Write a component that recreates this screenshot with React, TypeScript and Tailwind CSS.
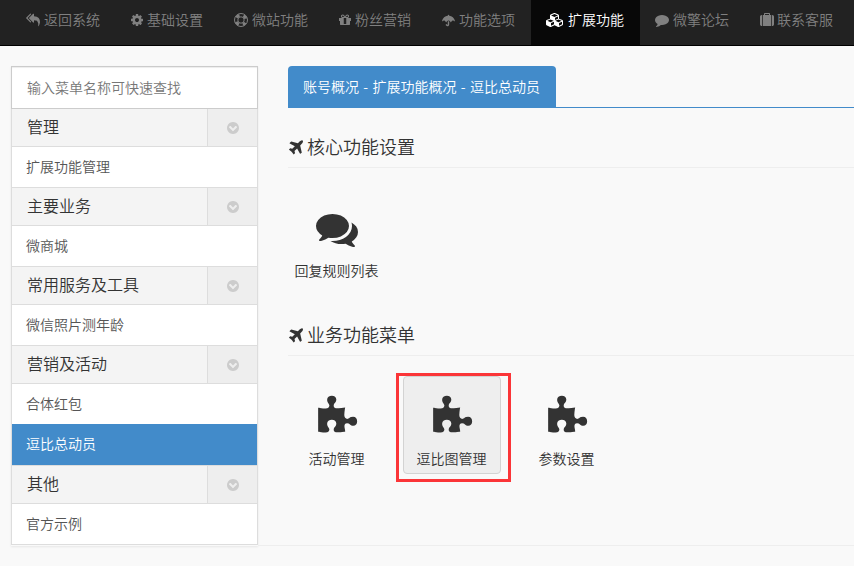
import React from "react";
import { FaUmbrella } from "react-icons/fa";

function Glyph({ d, className, viewBox = "0 0 1792 1792" }: { d: string; className: string; viewBox?: string }) {
  return (
    <svg viewBox={viewBox} fill="currentColor" className={`shrink-0 overflow-visible ${className}`}>
      <path d={d} />
    </svg>
  );
}

const REPLY_ALL =
  "M640 1082v70q0 42-39 59-13 5-25 5-27 0-45-19l-512-512q-19-19-19-45t19-45l512-512q29-31 70-14 39 17 39 59v69l-397 398q-19 19-19 45t19 45zm1152 58q0 58-17 133.5t-38.5 138-48 125-40.5 90.5l-20 40q-8 17-28 17-6 0-9-1-25-8-23-34 43-400-106-565-64-71-170.5-110.5t-267.5-52.5v251q0 42-39 59-13 5-25 5-27 0-45-19l-512-512q-19-19-19-45t19-45l512-512q29-31 70-14 39 17 39 59v262q411 28 599 221 169 173 169 509z";
const COG =
  "M1152 896q0-106-75-181t-181-75-181 75-75 181 75 181 181 75 181-75 75-181zm512-109v222q0 12-8 23t-20 13l-185 28q-19 54-39 91 35 50 107 138 10 12 10 25t-9 23q-27 37-99 108t-94 71q-12 0-26-9l-138-108q-44 23-91 38-16 136-29 186-7 28-36 28h-222q-14 0-24.5-8.5t-11.5-21.5l-28-184q-49-16-90-37l-141 107q-10 9-25 9-14 0-25-11-126-114-165-168-7-10-7-23 0-12 8-23 15-21 51-66.5t54-70.5q-27-50-41-99l-183-27q-13-2-21-12.5t-8-23.5v-222q0-12 8-23t19-13l186-28q14-46 39-92-40-57-107-138-10-12-10-24 0-10 9-23 26-36 98.5-107.5t94.5-71.5q13 0 26 10l138 107q44-23 91-38 16-136 29-186 7-28 36-28h222q14 0 24.5 8.5t11.5 21.5l28 184q49 16 90 37l142-107q9-9 24-9 13 0 25 10 129 119 165 170 7 8 7 22 0 12-8 23-15 21-51 66.5t-54 70.5q26 50 41 98l183 28q13 2 21 12.5t8 23.5z";
const GIFT =
  "M1056 1356v-716h-320v716q0 25 18 38.5t46 13.5h192q28 0 46-13.5t18-38.5zm-456-844h195l-126-161q-26-31-69-31-40 0-68 28t-28 68 28 68 68 28zm688-96q0-40-28-68t-68-28q-43 0-69 31l-125 161h194q40 0 68-28t28-68zm376 256v320q0 14-9 23t-23 9h-96v416q0 40-28 68t-68 28h-1088q-40 0-68-28t-28-68v-416h-96q-14 0-23-9t-9-23v-320q0-14 9-23t23-9h440q-93 0-158.5-65.5t-65.5-158.5 65.5-158.5 158.5-65.5q107 0 168 77l128 165 128-165q61-77 168-77 93 0 158.5 65.5t65.5 158.5-65.5 158.5-158.5 65.5h440q14 0 23 9t9 23z";
const CUBES =
  "M640 1632l384-192v-314l-384 164v342zm-64-454l404-173-404-173-404 173zm1088 454l384-192v-314l-384 164v342zm-64-454l404-173-404-173-404 173zm-448-293l384-165v-266l-384 164v267zm-64-379l441-189-441-189-441 189zm1088 518v416q0 36-19 67t-52 47l-448 224q-25 14-57 14t-57-14l-448-224q-4-2-7-4-2 2-7 4l-448 224q-25 14-57 14t-57-14l-448-224q-33-16-52-47t-19-67v-416q0-38 21.5-70t56.5-48l434-186v-400q0-38 21.5-70t56.5-48l448-192q23-10 50-10t50 10l448 192q35 16 56.5 48t21.5 70v400l434 186q36 16 57 48t21 70z";
const COMMENT =
  "M1792 896q0 174-120 321.5t-326 233-450 85.5q-70 0-145-8-198 175-460 242-49 14-114 22-17 2-30.5-9t-17.5-29v-1q-3-4-.5-12t2-10 4.5-9.5l6-9 7-8.5 8-9q7-8 31-34.5t34.5-38 31-39.5 32.5-51 27-59 26-76q-157-89-247.5-220t-90.5-281q0-174 120-321.5t326-233 450-85.5 450 85.5 326 233 120 321.5z";
const SUITCASE =
  "M640 256h512v-128h-512v128zm-352 0v1408h-64q-92 0-158-66t-66-158v-960q0-92 66-158t158-66h64zm1120 0v1408h-1024v-1408h128v-160q0-40 28-68t68-28h576q40 0 68 28t28 68v160h128zm384 224v960q0 92-66 158t-158 66h-64v-1408h64q92 0 158 66t66 158z";
const CHEVRON_CIRCLE =
  "M941 1293l454-454q19-19 19-45t-19-45l-102-102q-19-19-45-19t-45 19l-307 307-307-307q-19-19-45-19t-45 19l-102 102q-19 19-19 45t19 45l454 454q19 19 45 19t45-19zm723-397q0 209-103 385.5t-279.5 279.5-385.5 103-385.5-103-279.5-279.5-103-385.5 103-385.5 279.5-279.5 385.5-103 385.5 103 279.5 279.5 103 385.5z";
const PLANE =
  "M1568 160q44 52 12 148t-108 172l-161 161 160 696q5 19-12 33l-128 96q-7 6-19 6-4 0-7-1-15-3-21-16l-279-508-259 259 53 194q5 17-8 31l-96 96q-9 9-23 9h-2q-15-2-24-13l-189-252-252-189q-11-7-13-23-1-13 9-25l96-97q9-9 23-9 6 0 8 1l194 53 259-259-508-279q-14-8-17-24-2-16 9-27l128-128q14-13 30-8l665 159 160-160q76-76 172-108t148 12z";
const COMMENTS =
  "M1408 768q0 139-94 257t-256.5 186.5-353.5 68.5q-86 0-176-16-124 88-278 128-36 9-86 16h-3q-11 0-20.5-8t-11.5-21q-1-3-1-6.5t.5-6.5 2-6l2.5-5 3.5-5.5 4-5 4.5-5 4-4.5q5-6 23-25t26-29.5 22.5-29 25-38.5 20.5-44q-124-72-195-177t-71-224q0-139 94-257t256.5-186.5 353.5-68.5 353.5 68.5 256.5 186.5 94 257zm384 256q0 120-71 224.5t-195 176.5q10 24 20.5 44t25 38.5 22.5 29 26 29.5 23 25q1 1 4 4.5t4.5 5 4 5 3.5 5.5l2.5 5 2 6 .5 6.5-1 6.5q-3 14-13 22t-22 7q-50-7-86-16-154-40-278-128-90 16-176 16-271 0-472-132 58 4 88 4 161 0 309-45t264-129q125-92 192-212t67-254q0-77-23-152 129 71 204 178t75 230z";
const PUZZLE =
  "M1755 1083q0 81-44.5 135t-123.5 54q-41 0-77.5-17.5t-59-38-56.5-38-71-17.5q-110 0-110 124 0 39 16 115t15 115v5q-22 0-33 1-34 3-97.5 11.5t-115.5 13.5-98 5q-61 0-103-26.5t-42-83.5q0-37 17.5-71t38-56.5 38-59 17.5-77.5q0-79-54-123.5t-135-44.5q-84 0-143 45.5t-59 127.5q0 43 15 83t33.5 64.5 33.5 53 15 50.5q0 45-46 89-37 35-117 35-95 0-245-24-9-2-27.5-4t-27.5-4l-13-2q-1 0-3-1-2 0-2-1v-1024q2 1 17.5 3.5t34 5 21.5 3.5q150 24 245 24 80 0 117-35 46-44 46-89 0-22-15-50.5t-33.5-53-33.5-64.5-15-83q0-82 59-127.5t144-45.5q80 0 134 44.5t54 123.5q0 41-17.5 77.5t-38 59-38 56.5-17.5 71q0 57 42 83.5t103 26.5q64 0 180-15t163-17v2q-1 2-3.5 17.5t-5 34-3.5 21.5q-24 150-24 245 0 80 35 117 44 46 89 46 22 0 50.5-15t53-33.5 64.5-33.5 83-15q82 0 127.5 59t45.5 143z";

function LifeRing() {
  return (
    <svg viewBox="0 0 14 14" fill="none" stroke="currentColor" className="size-3.5 shrink-0">
      <circle cx="7" cy="7" r="6.5" />
      <circle cx="7" cy="7" r="3.2" />
      <circle cx="7" cy="7" r="4.9" strokeWidth="3" strokeDasharray="3.85 3.85" strokeDashoffset="1.92" transform="rotate(45 7 7)" />
    </svg>
  );
}

const nav = [
  { label: "返回系统", width: "w-[105px]", icon: <Glyph d={REPLY_ALL} className="size-3.5" /> },
  { label: "基础设置", width: "w-[103px]", icon: <Glyph d={COG} className="-mx-px size-3.5" /> },
  { label: "微站功能", width: "w-[105px]", icon: <LifeRing /> },
  { label: "粉丝营销", width: "w-[103px]", icon: <Glyph d={GIFT} className="-mx-px size-3.5" /> },
  { label: "功能选项", width: "w-[104px]", icon: <FaUmbrella className="h-[13px] w-[13px]" /> },
  {
    label: "扩展功能",
    width: "w-[109px]",
    icon: <Glyph d={CUBES} viewBox="0 0 2304 1792" className="h-3.5 w-[18px]" />,
    active: true,
  },
  { label: "微擎论坛", width: "w-[105px]", icon: <Glyph d={COMMENT} className="size-3.5" /> },
  { label: "联系客服", width: "w-[104px]", icon: <Glyph d={SUITCASE} className="size-3.5" /> },
];

const groups = [
  { title: "管理", items: ["扩展功能管理"] },
  { title: "主要业务", items: ["微商城"] },
  { title: "常用服务及工具", items: ["微信照片测年龄"] },
  { title: "营销及活动", items: ["合体红包", "逗比总动员"] },
  { title: "其他", items: ["官方示例"] },
];

function Section({ title, children }: { title: string; children: React.ReactNode }) {
  return (
    <section className="h-[188px]">
      <h2 className="flex h-10 items-center border-b border-[#eee] text-[18px] leading-none">
        <Glyph d={PLANE} className="-ml-px size-[18px]" />
        <span className="ml-[2px] pb-[3px]">{title}</span>
      </h2>
      <div className="flex gap-[17px] pt-5">{children}</div>
    </section>
  );
}

function Tile({ label, icon, selected }: { label: string; icon: string; selected?: boolean }) {
  return (
    <div
      className={`relative flex h-[98px] w-[98px] flex-col items-center rounded-[4px] border pt-[19px] ${
        selected ? "border-[#d3d3d3] bg-[#eee]" : "border-transparent"
      }`}
    >
      <Glyph d={icon} className="size-[42px]" />
      <span className="mt-[10px] pr-px text-[14px] leading-5 whitespace-nowrap">{label}</span>
      {selected && <div className="absolute -top-[4px] -left-[8px] h-[109px] w-[115px] border-[3px] border-[#fb3538]" />}
    </div>
  );
}

export default function App() {
  return (
    <div className="h-[566px] w-[854px] overflow-hidden bg-[#f9f9f9] font-['Noto_Sans_CJK_SC',sans-serif] text-[14px] font-[350] text-[#333]">
      <nav className="flex h-[46px] border-b border-black bg-[#222] pl-[11px]">
        {nav.map((n) => (
          <div
            key={n.label}
            className={`flex shrink-0 items-center justify-between pr-4 pb-[5px] pl-[15px] ${n.width} ${
              n.active ? "bg-[#080808] text-white" : "text-[#808080]"
            }`}
          >
            {n.icon}
            <span className="pb-[2px] leading-5 whitespace-nowrap">{n.label}</span>
          </div>
        ))}
      </nav>

      <div className="flex h-[500px] pt-5 pl-[11px]">
        <aside className="flex h-[480px] w-[247px] shrink-0 flex-col shadow-[0_1px_2px_rgba(0,0,0,0.08)]">
          <div className="flex h-[43px] items-center border border-[#ccc] bg-white pb-px pl-[15px] text-[#777] shadow-[inset_0_1px_1px_rgba(0,0,0,0.075)]">
            输入菜单名称可快速查找
          </div>
          <div className="border-x border-b border-[#ddd] bg-white">
            {groups.map((g, i) => (
              <div key={g.title} className={i > 0 ? "border-t border-[#ddd]" : ""}>
                <div className="flex h-[38px] border-b border-[#ddd] bg-[#f4f4f4]">
                  <div className="flex-1 pl-[15px] text-[16px] leading-[34px] text-[#333]">{g.title}</div>
                  <div className="flex w-[50px] items-center justify-center border-l border-[#ddd] bg-[#eee] pt-px pl-px text-[#ccc]">
                    <Glyph d={CHEVRON_CIRCLE} className="size-3.5" />
                  </div>
                </div>
                {g.items.map((t) => (
                  <div
                    key={t}
                    className={`pl-[14px] leading-[38px] ${
                      t === "逗比总动员" ? "h-[41px] bg-[#428bca] text-white" : "h-10 text-[#555]"
                    }`}
                  >
                    {t}
                  </div>
                ))}
              </div>
            ))}
          </div>
        </aside>

        <main className="flex-1 border-b border-[#eee] pl-[30px]">
          <div className="flex h-[42px] border-b border-[#428bca]">
            <div className="h-[42px] w-[268px] rounded-t-[4px] bg-[#428bca] pl-[15px] leading-[40px] whitespace-pre text-white [word-spacing:1.2px]">
              账号概况 - 扩展功能概况 - 逗比总动员
            </div>
          </div>
          <div className="pt-5">
            <Section title="核心功能设置">
              <Tile label="回复规则列表" icon={COMMENTS} />
            </Section>
            <Section title="业务功能菜单">
              <Tile label="活动管理" icon={PUZZLE} />
              <Tile label="逗比图管理" icon={PUZZLE} selected />
              <Tile label="参数设置" icon={PUZZLE} />
            </Section>
          </div>
        </main>
      </div>
    </div>
  );
}
